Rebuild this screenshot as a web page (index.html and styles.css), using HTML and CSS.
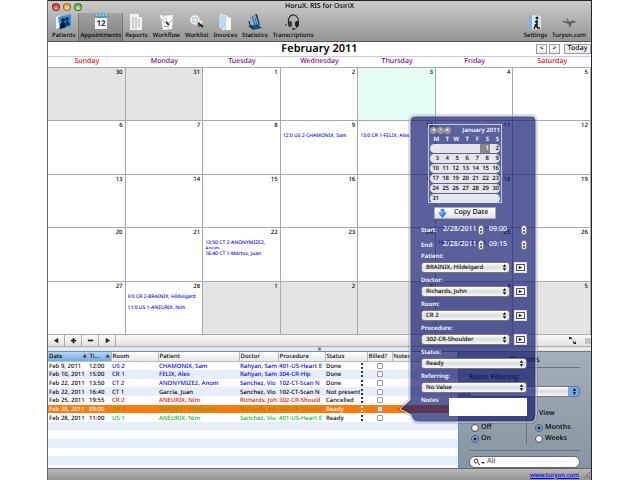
FILE: index.html
```html
<!DOCTYPE html>
<html lang="en">
<head>
<meta charset="utf-8">
<title>HoruX. RIS for OsiriX</title>
<link rel="stylesheet" href="styles.css">
</head>
<body>
<div class="window">
  <header class="chrome">
    <div class="titlebar">
      <div class="lights"><i class="light red"></i><i class="light amber"></i><i class="light green"></i></div>
      <span>HoruX. RIS for OsiriX</span>
    </div>
    <nav class="toolbar">
      <button class="tool"><svg viewBox="0 0 18 18"><path d="M1 4l4-2v12l-4 2z" fill="#e8f4ff"/><path d="M3 4l13-3v12L5 17z" fill="#2a9bea"/><circle cx="8" cy="7" r="2" fill="#07172c"/><path d="M5 16c0-5 1-7 3-7s3 2 3 5z" fill="#07172c"/><circle cx="12" cy="6" r="2" fill="#0d3560"/><path d="M10 13c0-3 1-5 2-5 2 0 3 2 3 4z" fill="#0d3560"/></svg>Patients</button>
      <button class="tool selected"><svg viewBox="0 0 18 18"><path d="M3 2h12v14H3z" fill="#f8f8f8"/><path d="M3 1h12v4H3z" fill="#4b9fca"/><path d="M5 1v2M8 1v2M11 1v2M14 1v2" stroke="#d9eef8"/><text x="9" y="13" class="day-glyph">12</text></svg>Appointments</button>
      <button class="tool"><svg viewBox="0 0 18 18"><path d="M3 1h9l3 3v13H3z" fill="#f3f3f3"/><path d="M12 1v3h3z" fill="#aaa"/><path d="M5 5h6M5 7h8M5 9h8M5 11h8M5 13h8M5 15h6" stroke="#a5a5a5" stroke-dasharray="2 1"/></svg>Reports</button>
      <button class="tool"><svg viewBox="0 0 18 18"><path d="M4 3l12-1-1 14-9 1z" fill="#fafafa"/><path d="M2 3c1-2 4-2 5 0l3 5-3 2-2-4C4 6 2 5 2 3z" fill="#eee" stroke="#999" stroke-width=".5"/><path d="M9 9l3 3" stroke="#333" stroke-width="2"/><path d="M12 10l3-3M7 13l5 1" stroke="#999"/></svg>Workflow</button>
      <button class="tool"><svg viewBox="0 0 18 18"><circle cx="7" cy="7" r="4" fill="#bcc6cf" stroke="#f6f6f6" stroke-width="1.5"/><circle cx="7" cy="7" r="2" fill="#e7eef3"/><path d="M10 10l5 4" stroke="#222" stroke-width="2"/><circle cx="13" cy="9" r="1.5" fill="#f1ecd8"/><circle cx="11" cy="13" r="1" fill="#555"/></svg>Worklist</button>
      <button class="tool"><svg viewBox="0 0 18 18"><path d="M6 3l9 2v12H6z" fill="#fff"/><path d="M3 2l7 1v14l-7-2z" fill="#b9daf0"/><path d="M3 2l2-1 7 2v2l-2-2z" fill="#e9f6ff"/></svg>Invoices</button>
      <button class="tool"><svg viewBox="0 0 18 18"><path d="M2 13l9-2 5 4-9 2z" fill="#1a4b7a"/><path d="M4 4l3-1 3 9-3 1z" fill="#2c7fc4"/><path d="M8 2l3-1 3 11-3 1z" fill="#123a66"/><path d="M5 4l2 8M9 2l3 10" stroke="#9dd3ff"/><path d="M3 8l1 4 3 3" fill="none" stroke="#111"/></svg>Statistics</button>
      <button class="tool"><svg viewBox="0 0 18 18"><path d="M5 12C3 5 7 1 10 2c4 1 5 5 4 9" fill="none" stroke="#222" stroke-width="1.2"/><ellipse cx="6" cy="11" rx="2" ry="3" fill="#333"/><ellipse cx="13" cy="11" rx="2" ry="3" fill="#1b1b1b"/><path d="M13 13c0 3-2 3-4 3M3 12H1" stroke="#333" fill="none"/><circle cx="9" cy="16" r="1" fill="#222"/></svg>Transcriptions</button>
      <span class="grow"></span>
      <button class="tool"><svg viewBox="0 0 18 18"><path d="M3 3l4-2v15l-4 1z" fill="#7cb4de"/><path d="M6 2l9 1v13l-9 1z" fill="#d9e6ef"/><circle cx="11" cy="5" r="1.5" fill="#222"/><path d="M9 9l2-1v7M8 16l2-5M11 15h3" fill="none" stroke="#111" stroke-width="1.5"/></svg>Settings</button>
      <button class="tool"><svg viewBox="0 0 18 18"><path d="M1 8l6 1-1-5 4 5 2-2 5 2-5 1-2 4-2-3-3-1z" fill="#6b7f72"/><path d="M3 8l6 2 6-1M10 14v-4" stroke="#364c42" stroke-width=".8" fill="none"/></svg>Turyon.com</button>
    </nav>
  </header>

  <section class="month">
    <div class="month-bar">
      <span></span>
      <h1>February 2011</h1>
      <div class="month-nav"><button>&lt;</button><button>&gt;</button><button class="today">Today</button></div>
    </div>
    <div class="weekdays"><span class="rest">Sunday</span><span>Monday</span><span>Tuesday</span><span>Wednesday</span><span>Thursday</span><span>Friday</span><span class="rest">Saturday</span></div>
    <div class="days">
      <div class="day other"><b>30</b></div><div class="day other"><b>31</b></div><div class="day"><b>1</b></div><div class="day"><b>2</b></div><div class="day now"><b>3</b></div><div class="day"><b>4</b></div><div class="day"><b>5</b></div>
      <div class="day"><b>6</b></div><div class="day"><b>7</b></div><div class="day"><b>8</b></div><div class="day"><b>9</b><p>12:0 US 2-CHAMONIX, Sam</p></div><div class="day"><b>10</b><p>15:0 CR 1-FELIX, Alex</p></div><div class="day"><b>11</b></div><div class="day"><b>12</b></div>
      <div class="day"><b>13</b></div><div class="day"><b>14</b></div><div class="day"><b>15</b></div><div class="day"><b>16</b></div><div class="day"><b>17</b></div><div class="day"><b>18</b></div><div class="day"><b>19</b></div>
      <div class="day"><b>20</b></div><div class="day"><b>21</b></div><div class="day"><b>22</b><p>13:50 CT 2-ANONYMIZE2, Anom</p><p>16:40 CT 1-Martos, Juan</p></div><div class="day"><b>23</b></div><div class="day"><b>24</b></div><div class="day"><b>25</b><p>19:55 CR 2-ANEURIX, Nim</p></div><div class="day"><b>26</b></div>
      <div class="day"><b>27</b></div><div class="day"><b>28</b><p>9:0 CR 2-BRAINIX, Hildelgard</p><p>11:0 US 1-ANEURIX, Nim</p></div><div class="day other"><b>1</b></div><div class="day other"><b>2</b></div><div class="day other"><b>3</b></div><div class="day other"><b>4</b></div><div class="day other"><b>5</b></div>
    </div>
  </section>

  <div class="actions">
    <button aria-label="Previous"><svg viewBox="0 0 8 8"><path d="M6 1v6L1 4z"/></svg></button>
    <button aria-label="Add"><svg viewBox="0 0 8 8"><path d="M3 1h2v2h2v2H5v2H3V5H1V3h2z"/></svg></button>
    <button aria-label="Remove"><svg viewBox="0 0 8 8"><path d="M1 3h6v2H1z"/></svg></button>
    <button aria-label="Next"><svg viewBox="0 0 8 8"><path d="M2 1v6l5-3z"/></svg></button>
    <span class="grow"></span>
    <button class="resize" aria-label="Expand"><svg viewBox="0 0 10 10"><path d="M0 0h4L3 1l2 2-1 1-2-2-2 2zM10 10H6l1-1-2-2 1-1 2 2 2-2z"/></svg></button>
    <svg class="grip" viewBox="0 0 6 6"><path d="M1 0v6M3 0v6M5 0v6" stroke="#999"/></svg>
  </div>
  <div class="splitter"></div>

  <main class="lower">
    <div class="list">
      <table>
        <colgroup><col class="c-date"><col class="c-time"><col class="c-room"><col class="c-patient"><col class="c-doctor"><col class="c-proc"><col class="c-status"><col class="c-billed"><col></colgroup>
        <thead><tr><th class="sorted"><i>▲</i>Date</th><th class="sorted"><i>▲</i>Ti…</th><th>Room</th><th>Patient</th><th>Doctor</th><th>Procedure</th><th>Status</th><th>Billed?</th><th>Notes</th></tr></thead>
        <tbody>
          <tr class="blue"><td>Feb 9, 2011</td><td>12:00</td><td>US 2</td><td>CHAMONIX, Sam</td><td>Rahyan, Sam</td><td>401-US-Heart E</td><td><i></i>Done</td><td><input type="checkbox" aria-label="Billed"></td><td></td></tr>
          <tr class="blue"><td>Feb 10, 2011</td><td>15:00</td><td>CR 1</td><td>FELIX, Alex</td><td>Rahyan, Sam</td><td>304-CR-Hip</td><td><i></i>Done</td><td><input type="checkbox" aria-label="Billed"></td><td></td></tr>
          <tr class="blue"><td>Feb 22, 2011</td><td>13:50</td><td>CT 2</td><td>ANONYMIZE2, Anom</td><td>Sanchez, Vio</td><td>102-CT-Scan N</td><td><i></i>Done</td><td><input type="checkbox" aria-label="Billed"></td><td></td></tr>
          <tr><td>Feb 22, 2011</td><td>16:40</td><td>CT 1</td><td>Garcia, Juan</td><td>Sanchez, Vio</td><td>102-CT-Scan N</td><td><i></i>Not present</td><td><input type="checkbox" aria-label="Billed"></td><td></td></tr>
          <tr class="crimson"><td>Feb 25, 2011</td><td>19:55</td><td>CR 2</td><td>ANEURIX, Nim</td><td>Richards, Joh</td><td>302-CR-Should</td><td><i></i>Cancelled</td><td><input type="checkbox" aria-label="Billed"></td><td></td></tr>
          <tr class="picked"><td>Feb 28, 2011</td><td>09:00</td><td>CR 2</td><td>BRAINIX, Hildelgard</td><td>Richards, Joh</td><td>302-CR-Should</td><td><i></i>Ready</td><td><input type="checkbox" aria-label="Billed"></td><td></td></tr>
          <tr class="lime"><td>Feb 28, 2011</td><td>11:00</td><td>US 1</td><td>ANEURIX, Nim</td><td>Sanchez, Vio</td><td>401-US-Heart E</td><td><i></i>Ready</td><td><input type="checkbox" aria-label="Billed"></td><td></td></tr>
          <tr><td colspan="9"></td></tr><tr><td colspan="9"></td></tr><tr><td colspan="9"></td></tr><tr><td colspan="9"></td></tr><tr><td colspan="9"></td></tr>
        </tbody>
      </table>
    </div>
    <aside class="options">
      <h2>Options</h2>
      <label class="filter-label" for="rooms">Room Filtering:</label>
      <span class="pick aqua"><select id="rooms"><option>No Value</option></select><svg viewBox="0 0 6 8"><path d="M3 0l2 3H1zM3 8l2-3H1z"/></svg></span>
      <div class="choices">
        <fieldset><legend>Weekends</legend><label><input type="radio" name="weekend">Off</label><label><input type="radio" name="weekend" checked>On</label></fieldset>
        <fieldset class="view"><legend>View</legend><label><input type="radio" name="view" checked>Months</label><label><input type="radio" name="view">Weeks</label></fieldset>
      </div>
      <div class="search"><svg viewBox="0 0 12 8"><circle cx="3" cy="3" r="2" fill="none" stroke="#333"/><path d="M5 5l2 2" stroke="#333"/><path d="M8 4h4l-2 2z" fill="#333"/></svg><input type="text" value="All" aria-label="Search"></div>
    </aside>
  </main>
  <footer class="status"><a href="https://www.turyon.com">www.turyon.com</a><svg viewBox="0 0 8 8"><path d="M1 8l7-7M4 8l4-4M7 8l1-1" stroke="#666"/></svg></footer>

  <form class="popover">
    <svg class="bubble" viewBox="0 0 138 308" preserveAspectRatio="none"><path class="halo" d="M17 1h115q5 0 5 5v294q0 7-6 7H19q-5 0-7-7L1 294l10-9V7q0-6 6-6z"/><path d="M17 1h115q5 0 5 5v294q0 7-6 7H19q-5 0-7-7L1 294l10-9V7q0-6 6-6z"/></svg>
    <div class="mini">
      <div class="mini-head"><span class="dots"><button type="button" aria-label="Previous month">◂</button><button type="button" aria-label="Current month">•</button><button type="button" aria-label="Next month">▸</button></span><span>January 2011</span></div>
      <div class="mini-row names"><span>M</span><span>T</span><span>W</span><span>T</span><span>F</span><span>S</span><span>S</span></div>
      <div class="mini-row"><span></span><span></span><span></span><span></span><span></span><span class="on">1</span><span>2</span></div>
      <div class="mini-row"><span>3</span><span>4</span><span>5</span><span>6</span><span>7</span><span>8</span><span>9</span></div>
      <div class="mini-row"><span>10</span><span>11</span><span>12</span><span>13</span><span>14</span><span>15</span><span>16</span></div>
      <div class="mini-row"><span>17</span><span>18</span><span>19</span><span>20</span><span>21</span><span>22</span><span>23</span></div>
      <div class="mini-row"><span>24</span><span>25</span><span>26</span><span>27</span><span>28</span><span>29</span><span>30</span></div>
      <div class="mini-row"><span>31</span><span></span><span></span><span></span><span></span><span></span><span></span></div>
    </div>
    <button type="button" class="copy"><svg viewBox="0 0 10 10"><path d="M3 0h4v4h3L5 10 0 4h3z" fill="#2f7fe0"/><path d="M4 1h1v5H3z" fill="#8fc4ff"/></svg>Copy Date</button>
    <div class="when"><label for="start">Start:</label><input id="start" class="date" value="2/28/2011"><i class="step"></i><input class="time" value="09:00" aria-label="Start time"><i class="step"></i></div>
    <div class="when"><label for="end">End:</label><input id="end" class="date" value="2/28/2011"><i class="step"></i><input class="time" value="09:15" aria-label="End time"><i class="step"></i></div>
    <div class="field"><label for="patient">Patient:</label><div class="line"><span class="pick"><select id="patient"><option>BRAINIX, Hildelgard</option></select><svg viewBox="0 0 6 8"><path d="M3 0l2 3H1zM3 8l2-3H1z"/></svg></span><button type="button" class="go" aria-label="Open patient"><svg viewBox="0 0 8 6"><path d="M2 1l4 2-4 2z"/></svg></button></div></div>
    <div class="field"><label for="doctor">Doctor:</label><div class="line"><span class="pick"><select id="doctor"><option>Richards, John</option></select><svg viewBox="0 0 6 8"><path d="M3 0l2 3H1zM3 8l2-3H1z"/></svg></span><button type="button" class="go" aria-label="Open doctor"><svg viewBox="0 0 8 6"><path d="M2 1l4 2-4 2z"/></svg></button></div></div>
    <div class="field"><label for="room">Room:</label><div class="line"><span class="pick"><select id="room"><option>CR 2</option></select><svg viewBox="0 0 6 8"><path d="M3 0l2 3H1zM3 8l2-3H1z"/></svg></span><button type="button" class="go" aria-label="Open room"><svg viewBox="0 0 8 6"><path d="M2 1l4 2-4 2z"/></svg></button></div></div>
    <div class="field"><label for="proc">Procedure:</label><div class="line"><span class="pick"><select id="proc"><option>302-CR-Shoulder</option></select><svg viewBox="0 0 6 8"><path d="M3 0l2 3H1zM3 8l2-3H1z"/></svg></span><button type="button" class="go" aria-label="Open procedure"><svg viewBox="0 0 8 6"><path d="M2 1l4 2-4 2z"/></svg></button></div></div>
    <div class="field"><label for="state">Status:</label><div class="line"><span class="pick"><select id="state"><option>Ready</option></select><svg viewBox="0 0 6 8"><path d="M3 0l2 3H1zM3 8l2-3H1z"/></svg></span></div></div>
    <div class="field"><label for="ref">Referring:</label><div class="line"><span class="pick"><select id="ref"><option>No Value</option></select><svg viewBox="0 0 6 8"><path d="M3 0l2 3H1zM3 8l2-3H1z"/></svg></span></div></div>
    <div class="notes"><label for="notes">Notes</label><textarea id="notes"></textarea></div>
  </form>
</div>
</body>
</html>
```
FILE: styles.css
```css
* { box-sizing: border-box; }
body { margin: 0; background: #fff; font: 500 6px/8px "Noto Sans", "Open Sans", sans-serif; color: #000; text-rendering: geometricPrecision; }
button, input, select, textarea { font: inherit; color: inherit; text-rendering: inherit; margin: 0; padding: 0; border: 0; background: none; appearance: none; border-radius: 0; }
svg { display: block; }
.grow { flex: 1; }

.window { position: relative; isolation: isolate; display: flex; flex-direction: column; height: 100vh; margin: 0 48px 0 47px; border-right: 1px solid #223; border-left: 1px solid #667; overflow: hidden; }

.chrome { border-top: 1px solid #222; border-bottom: 1px solid #555; background: linear-gradient(#cbcbcb, #959595); }
.titlebar { position: relative; height: 12px; text-align: center; line-height: 12px; font-size: 7px; }
.lights { position: absolute; left: 4px; top: 2px; display: flex; gap: 3px; }
.light { width: 8px; height: 8px; border-radius: 50%; border: 1px solid #0006; }
.red { background: radial-gradient(circle at 50% 75%, #ffb0a8, #e0372f 65%); }
.amber { background: radial-gradient(circle at 50% 75%, #fff0a0, #efa02a 65%); }
.green { background: radial-gradient(circle at 50% 75%, #d6ffb0, #62b13c 65%); }
.toolbar { display: flex; height: 28px; padding: 0 2px; }
.tool { display: flex; flex-direction: column; align-items: center; padding: 0 3px 0 2px; line-height: 9px; }
.tool svg { width: 18px; height: 18px; }
.tool.selected { background: #0002; border: 1px solid #0003; border-width: 0 1px; padding: 0 1px; }
.day-glyph { font: 700 8px "Noto Sans", sans-serif; text-anchor: middle; fill: #333; }

.month { flex: 1; display: flex; flex-direction: column; min-height: 0; }
.month-bar { display: grid; grid-template-columns: 1fr auto 1fr; align-items: center; height: 15px; border-bottom: 1px solid #c8c8e8; }
h1 { margin: 0; font: 600 11px/14px "Noto Sans", sans-serif; }
.month-nav { display: flex; justify-content: flex-end; gap: 2px; }
.month-nav button { width: 11px; height: 10px; border: 1px solid #999; background: linear-gradient(#fff, #eaeaea); line-height: 8px; font-size: 7px; }
.month-nav .today { width: 27px; margin-left: 2px; }
.weekdays { display: grid; grid-template-columns: repeat(7, 1fr); height: 11px; text-align: center; color: #808; font-size: 7px; line-height: 10px; border-bottom: 1px solid #aaa; }
.rest { color: #f00; }
.days { flex: 1; display: grid; grid-template-columns: repeat(7, 1fr); grid-template-rows: repeat(5, 1fr); min-height: 0; }
.day { border: 1px solid #aaa; border-width: 0 1px 1px 0; padding: 0 2px; overflow: hidden; line-height: 8px; }
.day b { display: block; height: 12px; text-align: right; font-weight: 500; }
.day p { margin: 0 0 2px; height: 9px; overflow: hidden; color: #00f; font-size: 5px; line-height: 6px; }
.other { background: #e4e4e4; }
.now { background: #e5fdf2; }

.actions { display: flex; align-items: center; height: 12px; background: linear-gradient(#fafafa, #e2e2e2); border-bottom: 1px solid #aaa; }
.actions button { width: 17px; height: 11px; display: grid; place-items: center; border-right: 1px solid #aaa; }
.actions button svg { width: 7px; height: 7px; fill: #222; }
.actions .resize { border: 0; }
.grip { width: 6px; height: 6px; margin-left: 4px; }
.splitter { height: 4px; background: radial-gradient(circle, #777 1px, #e8e8e8 2px); }

.lower { display: flex; height: 117px; overflow: hidden; }
.list { flex: 1; min-width: 0; overflow: hidden; border: 1px solid #5b95cf; border-left: 0; border-width: 1px 1px 0 0; background: #fff; }
table { width: 100%; height: 113px; border-collapse: collapse; table-layout: fixed; }
.c-date { width: 40px; } .c-time { width: 23px; } .c-room { width: 47px; } .c-patient { width: 81px; } .c-doctor { width: 39px; } .c-proc { width: 47px; } .c-status { width: 42px; } .c-billed { width: 25px; }
th, td { padding: 0 1px; text-align: left; font-weight: 500; white-space: nowrap; overflow: hidden; line-height: 8px; }
thead tr { height: 9px; }
tbody tr { height: 8px; }
th { background: linear-gradient(#fff, #e6e6e6); border-right: 1px solid #bbb; border-bottom: 1px solid #bbb; }
th.sorted { background: linear-gradient(#b9d6f5, #6fa9e4); }
th i { float: right; font: 5px/8px "DejaVu Sans", sans-serif; color: #246; }
tbody tr:nth-child(even) { background: #e6eefc; }
td i { float: right; width: 2px; height: 6px; margin: 1px 3px 0 0; border: 2px solid #333; border-width: 2px 0; }
td input { display: block; width: 6px; height: 6px; margin: 0 auto; border: 1px solid #999; border-radius: 1px; background: #fff; }
.blue td:nth-child(n+3):nth-child(-n+6) { color: #00f; }
.crimson td:nth-child(n+3):nth-child(-n+6) { color: #f00; }
.lime td:nth-child(n+3):nth-child(-n+6) { color: #0b2; }
tbody tr.picked { background: #ff7a0a; color: #fff; }
.picked td:nth-child(n+3):nth-child(-n+6) { color: #8a9a10; }
.picked i { border-color: #fff; }
.picked input { background: #ffd9b0; }

.options { width: 132px; padding: 0 11px 0 10px; background: linear-gradient(#a3afb9, #8795a2); border-top: 1px solid #777; font-size: 7px; line-height: 10px; }
.options h2 { margin: 2px 0 5px; padding-bottom: 2px; border-bottom: 1px solid #66727d; text-align: center; font: 500 8px/11px "Noto Sans", sans-serif; }
.filter-label { display: block; margin-bottom: 3px; }
.pick { position: relative; display: block; flex: 1; }
.pick select { display: block; width: 100%; height: 11px; padding: 0 10px 0 4px; border: 1px solid #777; border-radius: 3px; background: linear-gradient(#fff, #ddd 50%, #f8f8f8); line-height: 9px; color: #000; }
.pick svg { position: absolute; right: 3px; top: 2px; width: 5px; height: 7px; pointer-events: none; }
.pick.aqua select { background: linear-gradient(90deg, transparent 0 calc(100% - 11px), #6cabec 0), linear-gradient(#fff, #ddd 50%, #f8f8f8); }
.choices { display: flex; margin-top: 12px; border-bottom: 1px solid #66727d; padding-bottom: 6px; }
fieldset { flex: 0 0 57px; margin: 0; padding: 0 0 0 2px; border: 0; min-width: 0; }
fieldset.view { flex: 1; padding-left: 8px; border-left: 1px solid #66727d; }
.view legend { padding-left: 4px; }
legend { padding: 0; margin-bottom: 3px; }
fieldset label { display: flex; align-items: center; gap: 2px; height: 11px; }
input[type=radio] { width: 8px; height: 8px; border: 1px solid #555; border-radius: 50%; background: linear-gradient(#fff, #ddd); }
input[type=radio]:checked { background: radial-gradient(circle, #123 1px, #79b6f2 2px); }
.search { display: flex; align-items: center; gap: 2px; height: 12px; margin-top: 5px; padding-left: 3px; border: 1px solid #666; border-radius: 6px; background: #fff; color: #555; }
.search svg { width: 12px; height: 8px; }
.search input { flex: 1; min-width: 0; }

.status { display: flex; justify-content: flex-end; align-items: center; gap: 4px; height: 12px; padding-right: 1px; background: linear-gradient(#bbb, #929292); border-top: 1px solid #666; }
.status a { color: #00f; }
.status svg { width: 7px; height: 7px; }

.popover { position: absolute; z-index: 1; right: 54px; bottom: 57px; width: 138px; height: 308px; padding: 9px 10px 0 22px; color: #fff; }
.bubble { position: absolute; inset: 0; z-index: -1; width: 100%; height: 100%; overflow: visible; }
.bubble path { fill: #0e1870b0; stroke: #ddd; stroke-width: 1; }
.bubble .halo { fill: none; stroke: #0002; stroke-width: 4; }
.mini { width: 74px; height: 79px; margin-left: 7px; padding: 0 1px; border: 1px solid #c8cae0; font-weight: 600; }
.mini-head { display: flex; justify-content: space-between; align-items: center; height: 10px; }
.dots { display: flex; }
.dots button { display: grid; place-items: center; width: 7px; height: 7px; border-radius: 50%; background: #999; font: 5px/5px "DejaVu Sans", sans-serif; }
.mini-row { display: grid; grid-template-columns: repeat(7, 1fr); height: 9px; margin-bottom: 1px; border-radius: 5px; background: #e6e6ea; color: #222; text-align: right; line-height: 9px; overflow: hidden; }
.mini-row span { padding-right: 1px; }
.mini-row.names { margin: 0; background: none; color: #fff; }
.mini-row .on { background: #888; color: #fff; }
.copy { display: flex; align-items: center; gap: 7px; width: 62px; height: 12px; margin: 4px 0 3px 13px; padding: 0 3px; border: 1px solid #aaa; background: linear-gradient(#fff, #e2e2e2); color: #000; font-size: 7px; line-height: 10px; white-space: nowrap; }
.copy svg { flex: none; width: 9px; height: 9px; }
.when { display: flex; align-items: center; height: 15px; }
.when label { width: 22px; font-weight: 600; }
.when input { font-size: 7px; }
.when .date { width: 35px; }
.when .time { width: 32px; margin-left: 5px; }
.step { width: 6px; height: 10px; border: 1px solid #888; border-radius: 3px; background: linear-gradient(#666, #666) center 2px / 2px 2px no-repeat, linear-gradient(#666, #666) center 5px / 2px 2px no-repeat, #f2f2f2; }
.field { height: 24px; }
.field label, .notes label { display: block; height: 10px; line-height: 9px; font-weight: 600; }
.line { display: flex; gap: 4px; }
.line .go { width: 13px; height: 11px; display: grid; place-items: center; border: 1px solid #ddd; background: #fff; }
.go svg { width: 9px; height: 7px; border: 1px solid #555; fill: #222; }
.notes { display: flex; }
.notes label { width: 28px; }
.notes textarea { flex: 1; min-width: 0; height: 18px; margin-top: 2px; background: #fff; resize: none; color: #000; }
```
